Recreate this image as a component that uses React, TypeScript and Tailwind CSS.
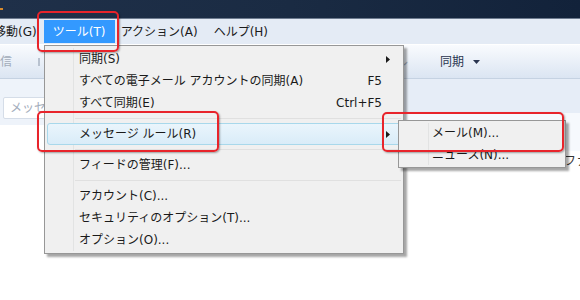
import React from "react";

const font = { fontFamily: '"DejaVu Sans", "Noto Sans CJK JP", sans-serif' };

function Arrow() {
  return (
    <svg width="4" height="7" viewBox="0 0 4 7" className="block">
      <path d="M0 0 L4 3.5 L0 7 Z" fill="#1a1a1a" />
    </svg>
  );
}

function Item({
  label,
  shortcut,
  sub,
  hover,
}: {
  label: string;
  shortcut?: string;
  sub?: boolean;
  hover?: boolean;
}) {
  return (
    <div
      className={
        "relative flex h-[22px] items-center pl-[31px] pr-[10px] text-[12px] text-[#1a1a1a] " +
        (hover
          ? "rounded-[3px] border border-[#a8d8eb] bg-gradient-to-b from-[#eaf5fc] to-[#d9ecf8]"
          : "border border-transparent")
      }
    >
      <span className="flex-1 whitespace-nowrap leading-none">{label}</span>
      {shortcut && <span className="mr-[8px] whitespace-nowrap leading-none">{shortcut}</span>}
      {sub && (
        <span className="flex w-[8px] justify-end">
          <Arrow />
        </span>
      )}
    </div>
  );
}

function Sep() {
  return (
    <div className="flex h-[9px] items-center pl-[28px]">
      <div className="h-[2px] flex-1 border-t border-[#e0e0e0] border-b-white" />
    </div>
  );
}

export default function App() {
  return (
    <div className="relative h-[300px] w-[580px] overflow-hidden bg-white" style={font}>
      {/* title bar */}
      <div className="relative h-[19px] border-b border-[#6d7b8f] bg-gradient-to-r from-[#1f3049] via-[#1a2b43] to-[#12223a]">
        <div className="absolute left-0 top-[8px] h-[2px] w-[3px] bg-[#d98a2b]" />
      </div>
      {/* menu bar */}
      <div className="flex h-[25px] items-center bg-[#e4ebf5] text-[12px] text-[#1a1a1a]">
        <div className="ml-[-6px] flex h-full items-center whitespace-nowrap pr-[7px] leading-none">移動(G)</div>
        <div className="flex h-[23px] w-[71px] items-center justify-center whitespace-nowrap bg-[#3399ff] leading-none text-white">
          ツール(T)
        </div>
        <div className="ml-[6px] whitespace-nowrap leading-none">アクション(A)</div>
        <div className="ml-[16px] whitespace-nowrap leading-none">ヘルプ(H)</div>
      </div>
      {/* toolbar */}
      <div className="flex h-[34px] items-center border-t border-white bg-gradient-to-b from-[#f9fbfe] to-[#dbe5f2] text-[12px]">
        <div className="ml-[-12px] whitespace-nowrap leading-none text-[#a3adbb]">送信</div>
        <div className="ml-[26px] h-[8px] w-[2px] bg-[#b8c2d0]" />
        <div className="ml-[356px] leading-none text-[#a3adbb]">ル</div>
        <div className="ml-[32px] flex items-center gap-[9px] whitespace-nowrap leading-none text-[#2a3550]">
          <span>同期</span>
          <svg width="7" height="4" viewBox="0 0 7 4">
            <path d="M0 0 L7 0 L3.5 4 Z" fill="#2a3550" />
          </svg>
        </div>
      </div>
      {/* content */}
      <div className="flex border-t border-[#c5d2e2]">
        <div className="flex w-[44px] flex-col">
          <div className="h-[46px] bg-[#eef3fa] pl-[3px] pt-[18px]">
            <div className="flex h-[22px] w-[90px] items-center overflow-hidden whitespace-nowrap rounded-[2px] border border-[#d5dde8] bg-white pl-[6px] text-[12px] leading-none text-[#a2acbb]">
              メッセージの検索
            </div>
          </div>
          <div className="h-[160px] bg-white" />
        </div>
        <div className="flex flex-1 flex-col">
          <div className="h-[34px] bg-[#e6edf7]" />
          <div className="h-[38px] bg-[#f6f9fd]" />
          <div className="flex h-[20px] items-center justify-end text-[12px] text-[#333]">
            <span className="mr-[-8px] whitespace-nowrap leading-none">ファ</span>
          </div>
          <div className="h-[120px] bg-white" />
        </div>
      </div>

      {/* dropdown menu */}
      <div className="absolute left-[44px] top-[45px] w-[360px] border border-[#979797] bg-[#f0f0f0] p-[2px] shadow-[3px_3px_2px_rgba(0,0,0,0.35)]">
        <div className="absolute bottom-[2px] left-[28px] top-[2px] w-[2px] border-l border-[#e2e3e3] border-r-white" />
        <div className="relative">
          <Item label="同期(S)" sub />
          <Item label="すべての電子メール アカウントの同期(A)" shortcut="F5" />
          <Item label="すべて同期(E)" shortcut="Ctrl+F5" />
          <Sep />
          <Item label="メッセージ ルール(R)" sub hover />
          <Sep />
          <Item label="フィードの管理(F)..." />
          <Sep />
          <Item label="アカウント(C)..." />
          <Item label="セキュリティのオプション(T)..." />
          <Item label="オプション(O)..." />
        </div>
      </div>

      {/* submenu */}
      <div className="absolute left-[398px] top-[120px] w-[168px] border border-[#979797] bg-[#f0f0f0] p-[1px] shadow-[3px_3px_2px_rgba(0,0,0,0.35)]">
        <div className="absolute bottom-[2px] left-[29px] top-[2px] w-[2px] border-l border-[#e2e3e3] border-r-white" />
        <div className="relative">
          <Item label="メール(M)..." />
          <Item label="ニュース(N)..." />
        </div>
      </div>

      {/* red annotations */}
      <div className="absolute left-[37px] top-[11px] h-[41px] w-[82px] rounded-[5px] border-[2px] border-[#e8242b] shadow-[1px_1px_2px_rgba(0,0,0,0.35)]" />
      <div className="absolute left-[37px] top-[111px] h-[41px] w-[182px] rounded-[5px] border-[2px] border-[#e8242b] shadow-[1px_1px_2px_rgba(0,0,0,0.35)]" />
      <div className="absolute left-[382px] top-[112px] h-[40px] w-[182px] rounded-[5px] border-[2px] border-[#e8242b] shadow-[1px_1px_2px_rgba(0,0,0,0.35)]" />
    </div>
  );
}
